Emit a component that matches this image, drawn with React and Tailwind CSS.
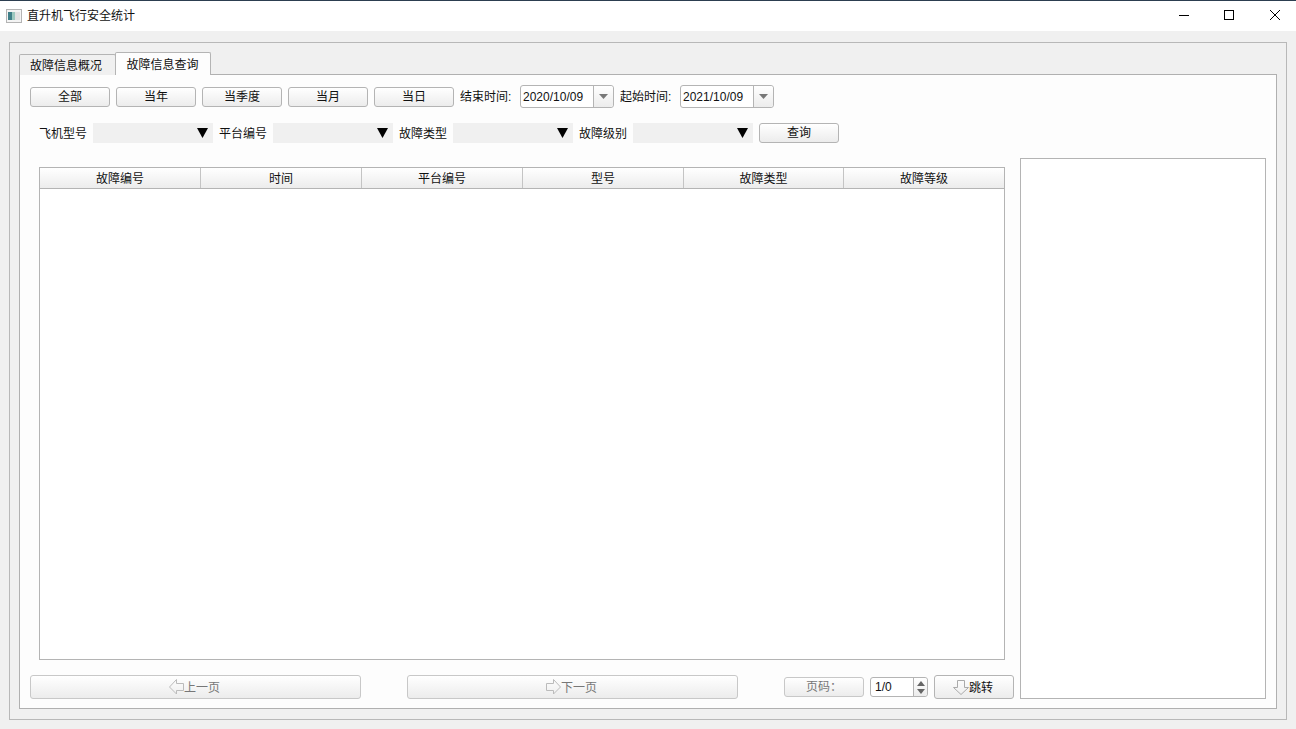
import React from 'react';

const fontCn = 'font-["Liberation_Sans","Noto_Sans_CJK_SC",sans-serif]';

function Btn({ children, className = '', disabled = false }) {
  return (
    <div
      className={`flex items-center justify-center rounded-[3px] border bg-gradient-to-b from-white to-[#ececec] text-[12px] ${
        disabled ? 'border-[#c8c8c8] text-[#777]' : 'border-[#b4b4b4] text-[#111]'
      } ${className}`}
    >
      {children}
    </div>
  );
}

function DateEdit({ value }) {
  return (
    <div className="flex h-[23px] w-[94px] rounded-[3px] border border-[#b4b4b4] bg-white">
      <div className="flex flex-1 items-center pl-[2px] pt-px text-[12px] text-[#111]">{value}</div>
      <div className="flex w-[20px] items-center justify-center rounded-r-[3px] border-l border-[#b4b4b4] bg-gradient-to-b from-white to-[#ececec]">
        <svg width="9" height="5" viewBox="0 0 9 5"><path d="M0 0h9L4.500 5z" fill="#777" /></svg>
      </div>
    </div>
  );
}

function Combo({ label }) {
  return (
    <>
      <div className="w-[60px] pl-[6px] pt-px text-[12px] leading-[20px] text-[#111]">{label}</div>
      <div className="flex h-[20px] w-[120px] items-center justify-end bg-[#f0f0f0] pr-[5px]">
        <svg width="11" height="10" viewBox="0 0 11 10"><path d="M0 0h11L5.500 10z" fill="#000" /></svg>
      </div>
    </>
  );
}

function HeadCell({ children, className = '' }) {
  return (
    <div className={`flex items-center justify-center pt-px text-[12px] text-[#111] ${className}`}>
      {children}
    </div>
  );
}

export default function App() {
  return (
    <div className={`flex h-[729px] w-[1296px] flex-col overflow-hidden bg-[#f0f0f0] ${fontCn}`}>
      {/* title bar */}
      <div className="flex h-[31px] items-center border-t border-[#2c3e50] bg-white">
        <svg className="ml-[6px]" width="16" height="14" viewBox="0 0 16 14">
          <rect x="0.500" y="0.500" width="15" height="13" fill="#f4f4f4" stroke="#b4b4b4" />
          <rect x="2" y="3" width="4" height="8" fill="#3f7f88" />
          <rect x="6" y="3" width="3" height="8" fill="#9cc8bf" />
          <rect x="9" y="3" width="5" height="8" fill="#e2e2e2" />
        </svg>
        <div className="ml-[5px] text-[12px] text-[#111]">直升机飞行安全统计</div>
        <div className="ml-auto flex h-full items-center">
          <svg width="46" height="30" viewBox="0 0 46 30"><path d="M19 14.500h10" stroke="#000" /></svg>
          <svg width="46" height="30" viewBox="0 0 46 30"><rect x="18.500" y="9.500" width="9" height="9" fill="none" stroke="#000" /></svg>
          <svg className="mr-[-2px]" width="46" height="30" viewBox="0 0 46 30"><path d="M18 9l10 10M28 9L18 19" stroke="#000" fill="none" /></svg>
        </div>
      </div>

      {/* outer frame */}
      <div className="ml-[9px] mt-[11px] flex h-[678px] w-[1278px] flex-col border border-[#b8b8b8] px-[9px] pt-[9px]">
        {/* tabs */}
        <div className="relative z-10 mb-[-1px] flex h-[23px] items-end">
          <div className="flex h-[21px] w-[97px] items-center justify-center rounded-t-[2px] border border-b-0 border-[#b4b4b4] bg-[#f0f0f0] pr-[3px] pt-[2px] text-[12px] text-[#111]">
            故障信息概况
          </div>
          <div className="ml-[-1px] flex h-[23px] w-[96px] items-center justify-center rounded-t-[2px] border border-b-0 border-[#b4b4b4] bg-[#fdfdfd] pr-[1px] pt-px text-[12px] text-[#111]">
            故障信息查询
          </div>
        </div>

        {/* tab pane */}
        <div className="h-[635px] w-[1258px] border border-[#b0b0b0] bg-[#fdfdfd] px-[10px] pt-[10px]">
          <div className="flex h-[23px] items-center">
            <div className="flex gap-[6px]">
              <Btn className="h-[20px] w-[80px]">全部</Btn>
              <Btn className="h-[20px] w-[80px]">当年</Btn>
              <Btn className="h-[20px] w-[80px]">当季度</Btn>
              <Btn className="h-[20px] w-[80px]">当月</Btn>
              <Btn className="h-[20px] w-[80px]">当日</Btn>
            </div>
            <div className="ml-[6px] w-[60px] pt-px text-[12px] text-[#111]">结束时间:</div>
            <DateEdit value="2020/10/09" />
            <div className="ml-[6px] w-[60px] pt-px text-[12px] text-[#111]">起始时间:</div>
            <DateEdit value="2021/10/09" />
          </div>

          <div className="mt-[15px] flex h-[20px]">
            <div className="ml-[3px] flex">
              <Combo label="飞机型号" />
              <Combo label="平台编号" />
              <Combo label="故障类型" />
              <Combo label="故障级别" />
            </div>
            <Btn className="ml-[6px] h-[20px] w-[80px]">查询</Btn>
          </div>

          <div className="mt-[15px] flex gap-[6px]">
            <div className="w-[984px]">
              {/* table */}
              <div className="ml-[9px] mt-[9px] h-[493px] w-[966px] border border-[#b4b4b4] bg-white">
                <div className="flex h-[21px] border-b border-[#b4b4b4] bg-gradient-to-b from-white to-[#ececec]">
                  <HeadCell className="w-[161px] border-r border-[#c4c4c4]">故障编号</HeadCell>
                  <HeadCell className="w-[161px] border-r border-[#c4c4c4]">时间</HeadCell>
                  <HeadCell className="w-[161px] border-r border-[#c4c4c4]">平台编号</HeadCell>
                  <HeadCell className="w-[161px] border-r border-[#c4c4c4]">型号</HeadCell>
                  <HeadCell className="w-[160px] border-r border-[#c4c4c4]">故障类型</HeadCell>
                  <HeadCell className="flex-1">故障等级</HeadCell>
                </div>
              </div>

              {/* pager */}
              <div className="mt-[15px] flex h-[24px] items-center">
                <Btn disabled className="h-[24px] w-[331px] pr-[2px] pt-px">
                  <svg className="mt-[-1px]" width="15" height="16" viewBox="0 0 15 16"><path d="M7.500 0.500L0.500 8l7 7v-3.500h7v-7h-7z" fill="none" stroke="#bbb" /></svg>
                  <span>上一页</span>
                </Btn>
                <Btn disabled className="ml-[46px] h-[24px] w-[331px] pr-[2px] pt-px">
                  <svg className="mt-[-1px]" width="15" height="16" viewBox="0 0 15 16"><path d="M7.500 0.500L14.500 8l-7 7v-3.500h-7v-7h7z" fill="none" stroke="#bbb" /></svg>
                  <span>下一页</span>
                </Btn>
                <Btn disabled className="ml-[46px] h-[20px] w-[80px]">{'页码\uFF1A'}</Btn>
                <div className="ml-[6px] flex h-[20px] w-[58px] rounded-[3px] border border-[#b4b4b4] bg-white">
                  <div className="flex flex-1 items-center pl-[4px] text-[12px] text-[#111]">1/0</div>
                  <div className="flex w-[14px] flex-col items-center justify-center gap-[3px] rounded-r-[3px] border-l border-[#b4b4b4] bg-gradient-to-b from-white to-[#ececec]">
                    <svg width="8" height="5" viewBox="0 0 8 5"><path d="M4 0l4 5H0z" fill="#666" /></svg>
                    <svg width="8" height="5" viewBox="0 0 8 5"><path d="M0 0h8L4 5z" fill="#666" /></svg>
                  </div>
                </div>
                <Btn className="ml-[6px] h-[24px] w-[80px] pr-[2px] pt-px">
                  <svg className="mt-[-1px]" width="16" height="15" viewBox="0 0 16 15"><path d="M4.500 0.500h7v7h4L8 14.500 0.500 7.500h4z" fill="none" stroke="#aaa" /></svg>
                  <span>跳转</span>
                </Btn>
              </div>
            </div>

            {/* right panel */}
            <div className="h-[541px] w-[246px] border border-[#b4b4b4] bg-white" />
          </div>
        </div>
      </div>
    </div>
  );
}
